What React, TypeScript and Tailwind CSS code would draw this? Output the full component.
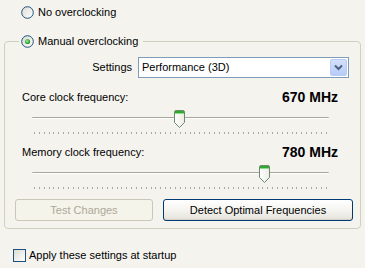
import React from "react";

function Radio({ checked }: { checked?: boolean }) {
  return (
    <svg width="13" height="13" viewBox="0 0 13 13" className="shrink-0">
      <defs>
        <linearGradient id={checked ? "rg1" : "rg0"} x1="0" y1="0" x2="1" y2="1">
          <stop offset="0" stopColor="#DCDBD3" />
          <stop offset="1" stopColor="#FFFFFF" />
        </linearGradient>
        <radialGradient id="dot" cx="0.4" cy="0.4" r="0.6">
          <stop offset="0" stopColor="#A4E7A4" />
          <stop offset="1" stopColor="#1C981C" />
        </radialGradient>
      </defs>
      <circle cx="6.5" cy="6.5" r="5.8" fill={`url(#${checked ? "rg1" : "rg0"})`} stroke="#1C5180" strokeWidth="1" />
      {checked && <circle cx="6.5" cy="6.5" r="2.6" fill="url(#dot)" />}
    </svg>
  );
}

function Thumb() {
  return (
    <svg width="11" height="18" viewBox="0 0 11 18" className="block">
      <defs>
        <linearGradient id="tb" x1="0" y1="0" x2="1" y2="0">
          <stop offset="0" stopColor="#FFFFFF" />
          <stop offset="1" stopColor="#ECEBE4" />
        </linearGradient>
      </defs>
      <path d="M0.5,2 Q0.5,0.5 2,0.5 H9 Q10.5,0.5 10.5,2 V12.5 L5.5,17.5 L0.5,12.5 Z" fill="url(#tb)" stroke="#6E8A6E" strokeWidth="1" />
      <rect x="1" y="1" width="9" height="2" fill="#2FAA2F" />
      <rect x="1" y="3" width="9" height="1" fill="#8CDA8C" />
    </svg>
  );
}

function Slider({ pos }: { pos: number }) {
  const ticks = Array.from({ length: 61 });
  return (
    <div className="relative ml-[27px] w-[297px] h-[26px] pt-[8px]">
      <div className="h-[2px] border-t border-[#A8A79F] bg-white rounded-[1px]" />
      <div className="mt-[13px] ml-[2px] w-[293px] h-[2px] flex justify-between">
        {ticks.map((_, i) => (
          <div key={i} className="w-[1px] h-[2px] bg-[#A9A89F]" />
        ))}
      </div>
      <div className="absolute top-[1px]" style={{ left: pos }}>
        <Thumb />
      </div>
    </div>
  );
}

function XPButton({ children, disabled, className }: { children: React.ReactNode; disabled?: boolean; className?: string }) {
  return (
    <div
      className={
        "h-[22px] rounded-[3px] border flex items-center justify-center " +
        (disabled
          ? "border-[#C9C7BA] bg-[#F5F4EA] text-[#ACA899] "
          : "border-[#003C74] bg-gradient-to-b from-[#FFFFFF] via-[#F5F4F0] to-[#E3E2DA] text-black shadow-[inset_0_-1px_0_#D6D0C5] ") +
        (className ?? "")
      }
    >
      {children}
    </div>
  );
}

export default function App() {
  return (
    <div className="w-[365px] h-[268px] overflow-hidden bg-[#F4F3EE] text-black text-[11px] leading-[13px] font-['Liberation_Sans',Arial,sans-serif] flex flex-col">
      <div className="mt-[6px] ml-[21px] h-[13px] flex items-center gap-[4px]">
        <Radio />
        <span>No overclocking</span>
      </div>

      <fieldset className="mt-[16px] ml-[4px] w-[357px] border border-[#D0D0BF] rounded-[4px] pb-[7px] flex flex-col">
        <legend className="ml-[14px] pl-[2px] pr-[5px] h-[13px] flex items-center gap-[4px]">
          <Radio checked />
          <span>Manual overclocking</span>
        </legend>

        <div className="mt-[9px] flex items-center justify-end pr-[11px] gap-[6px]">
          <span>Settings</span>
          <div className="w-[211px] h-[21px] border border-[#7F9DB9] bg-white flex items-center pl-[3px] pr-[1px]">
            <span className="flex-1">Performance (3D)</span>
            <div className="w-[17px] h-[17px] rounded-[2px] bg-gradient-to-b from-[#D4E0FB] to-[#B6CBF7] border border-[#B9CCF6] flex items-center justify-center">
              <svg width="9" height="7" viewBox="0 0 9 7">
                <path d="M1,1.5 L4.5,5 L8,1.5" fill="none" stroke="#4D6185" strokeWidth="2" />
              </svg>
            </div>
          </div>
        </div>

        <div className="mt-[13px] h-[13px] pl-[17px] pr-[22px] flex items-end justify-between">
          <span>Core clock frequency:</span>
          <span className="text-[14px] leading-[13px] font-bold">670 MHz</span>
        </div>
        <div className="mt-[5px]">
          <Slider pos={142} />
        </div>

        <div className="mt-[11px] h-[13px] pl-[17px] pr-[22px] flex items-end justify-between">
          <span>Memory clock frequency:</span>
          <span className="text-[14px] leading-[13px] font-bold">780 MHz</span>
        </div>
        <div className="mt-[5px]">
          <Slider pos={227} />
        </div>

        <div className="mt-[9px] ml-[10px] flex gap-[10px]">
          <XPButton disabled className="w-[138px]">Test Changes</XPButton>
          <XPButton className="w-[190px]">Detect Optimal Frequencies</XPButton>
        </div>
      </fieldset>

      <div className="mt-[20px] ml-[13px] h-[13px] flex items-center gap-[3px]">
        <div className="w-[13px] h-[13px] border border-[#1C5180] bg-gradient-to-br from-[#DCDBD3] to-white" />
        <span>Apply these settings at startup</span>
      </div>
    </div>
  );
}
